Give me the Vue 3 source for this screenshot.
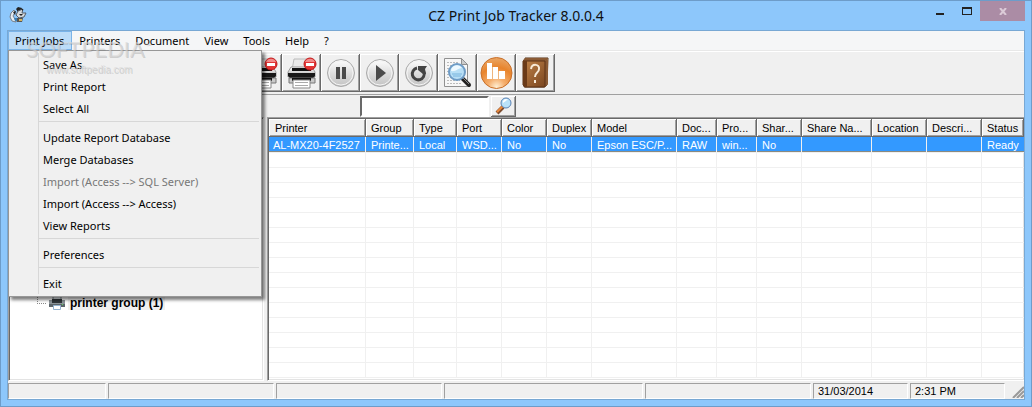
<template>
  <div class="window">
    <header class="title-bar">
      <svg class="app-icon" width="18" height="18" viewBox="0 0 18 18">
        <path d="M5 4 2 7 1 11 3 15 7 16 6 13 4 10 6 6z" fill="#e8eef2" stroke="#77808a" />
        <path d="M7 3 9 1 13 2 12 5 9 6z" fill="#222" />
        <path d="M9 5 14 3 13 7 17 7 15 11 10 12 7 9z" fill="#d5dade" stroke="#555d66" />
        <path d="M4 6 7 5 6 9z M10 8 14 8 12 10z M12 3h2v2z" fill="#222" />
        <path d="M6 12 14 12 13 16 8 16z" fill="#555" />
        <path d="M5 12h3v3H6z" fill="#3b7fb5" />
        <path d="M10 13h3v2h-3z" fill="#d7b35c" />
      </svg>
      <h1 class="title">CZ Print Job Tracker 8.0.0.4</h1>
      <div class="window-controls">
        <button class="control" aria-label="Minimize">
          <svg width="8" height="8" viewBox="0 0 8 8"><path d="M0 6h8v2H0z" fill="#222" /></svg>
        </button>
        <button class="control" aria-label="Maximize">
          <svg width="10" height="8" viewBox="0 0 10 8">
            <path d="M0 0h10v8H0z M1 2v5h8V2z" fill="#222" fill-rule="evenodd" />
          </svg>
        </button>
        <button class="control close" aria-label="Close">
          <svg width="8" height="7" viewBox="0 0 8 7">
            <path d="M1 0l6 7M7 0l-6 7" stroke="#dccbd8" stroke-width="2" />
          </svg>
        </button>
      </div>
    </header>

    <main class="client">
      <nav class="menu-bar">
        <button
          v-for="(item, i) in menuBar"
          :key="item"
          class="menu-bar-item"
          :class="{ open: i === 0 }"
        >
          {{ item }}
        </button>
      </nav>

      <div class="menu">
        <div v-for="(group, g) in menuGroups" :key="g" class="menu-group">
          <button
            v-for="item in group"
            :key="item.label"
            class="menu-item"
            :disabled="item.disabled"
          >
            {{ item.label }}
          </button>
        </div>
      </div>

      <div class="watermark">
        <span class="watermark-name">SOFTPEDIA<sup>™</sup></span>
        <span class="watermark-url">www.softpedia.com</span>
      </div>

      <div class="toolbar">
        <button v-for="tool in tools" :key="tool.label" class="tool" :aria-label="tool.label">
          <svg v-if="tool.icon === 'printer'" width="32" height="32" viewBox="0 0 32 32">
            <defs>
              <linearGradient id="body" x2="0" y2="1">
                <stop offset="0" stop-color="#fff" />
                <stop offset="1" stop-color="#a9a9a9" />
              </linearGradient>
            </defs>
            <path d="M8 2h13l2 11H6z" fill="#e9e9e9" stroke="#bbb" />
            <path d="M5 10h21l3 5v5H2v-5z" fill="url(#body)" stroke="#999" />
            <path d="M6 11h19v3H6z" fill="#111" />
            <path d="M2 16h27v3l-2 2H4l-2-2z" fill="#171717" />
            <path d="M3 21h26v5H3z" fill="#c9c9c9" stroke="#777" />
            <path d="M6 21h19v3H6z" fill="#111" />
            <path d="M7 23h17v8H7z" fill="#fff" stroke="#888" />
            <path d="M9 25.500h13M9 28.500h13" stroke="#aaa" />
            <path v-if="tool.page" d="M8 24h3v6H8z" fill="#3d7ec0" />
            <circle cx="24" cy="7" r="6" fill="#e23434" stroke="#c11b1b" />
            <path d="M19 5a5.500 5.500 0 0 1 10 0z" fill="#f28a8a" />
            <path d="M20 6h8v3h-8z" fill="#fff" />
          </svg>
          <svg v-else-if="tool.icon === 'report'" width="32" height="32" viewBox="0 0 32 32">
            <path d="M2.500 1.500h17l6 6v22h-23z" fill="#f7f7f7" stroke="#909090" />
            <path d="M19.500 1.500v6h6z" fill="#ccc" stroke="#909090" />
            <path
              d="M5 5.500h12M5 8.500h11M5 11.500h4M5 14.500h3M5 17.500h3M5 20.500h4M5 23.500h13M5 26.500h14"
              stroke="#bbb"
              stroke-dasharray="2 1"
            />
            <path d="M20 21l7 7" stroke="#222" stroke-width="4" stroke-linecap="round" />
            <path d="M21 21l6 6" stroke="#888" />
            <circle cx="15" cy="15" r="8" fill="#b8dff6" stroke="#6f9cc6" stroke-width="2" />
            <path d="M9 14a6 6 0 0 1 11-3c-4 0-6 4-11 3z" fill="#eef9ff" />
            <path d="M10 17h10M11 19h8" stroke="#79b4dd" />
          </svg>
          <svg v-else-if="tool.icon === 'chart'" width="34" height="34" viewBox="0 0 34 34">
            <defs>
              <radialGradient id="orange" cx=".5" cy=".95" r=".9">
                <stop offset="0" stop-color="#fff0d4" />
                <stop offset=".3" stop-color="#f5b070" />
                <stop offset=".7" stop-color="#e8842c" />
                <stop offset="1" stop-color="#e9a15d" />
              </radialGradient>
            </defs>
            <circle cx="16.500" cy="17" r="15.500" fill="url(#orange)" stroke="#c9702a" />
            <path d="M7 7h5v16H7z M13 11h5v12h-5z M19 15h6v8h-6z" fill="#fff" />
            <path d="M12.500 11v12M18.500 15v8" stroke="#eeb57e" />
          </svg>
          <svg v-else-if="tool.icon === 'help'" width="32" height="32" viewBox="0 0 32 32">
            <defs>
              <linearGradient id="cover" x2="1" y2="1">
                <stop offset="0" stop-color="#c08349" />
                <stop offset="1" stop-color="#7b461f" />
              </linearGradient>
            </defs>
            <path d="M5 1h23l-1 27-3 2H4z" fill="#e6d3ae" stroke="#563015" />
            <path d="M3 3l3-2h21l1 3v23l-3 3V4H3z" fill="#8a5a34" />
            <path d="M3 4h22v26H5l-2-2z" fill="url(#cover)" stroke="#5d3316" />
            <path d="M3 4h4v26H5l-2-2z" fill="#6a3a18" />
            <path
              d="M11 12c1-6 9-5 8 0 0 4-4 3-4 8M15 23v3"
              fill="none"
              stroke="#f7ead8"
              stroke-width="2"
            />
          </svg>
          <svg v-else width="32" height="32" viewBox="0 0 32 32">
            <defs>
              <linearGradient id="silver" x2="0" y2="1">
                <stop offset="0" stop-color="#fff" />
                <stop offset=".5" stop-color="#dedede" />
                <stop offset="1" stop-color="#c2c2c2" />
              </linearGradient>
            </defs>
            <circle cx="16" cy="16" r="13.500" fill="url(#silver)" stroke="#aaa" />
            <circle cx="16" cy="16" r="12" fill="none" stroke="#f4f4f4" />
            <path v-if="tool.icon === 'pause'" d="M11 10h4v12h-4z M17 10h4v12h-4z" fill="#4b4b4b" />
            <path v-if="tool.icon === 'play'" d="M12 8l10 8-10 8z" fill="#4b4b4b" />
            <g v-if="tool.icon === 'restart'">
              <path
                d="M14 11a6 6 0 1 0 7 4"
                fill="none"
                stroke="#444"
                stroke-width="3"
              />
              <path d="M15 9h9l-2 3 1 5h-3l-5-4z" fill="#444" />
            </g>
          </svg>
        </button>
      </div>

      <form class="search" @submit.prevent>
        <input v-model="query" class="search-input" type="text" aria-label="Search" />
        <button class="search-button" aria-label="Find">
          <svg width="18" height="18" viewBox="0 0 18 18">
            <path d="M2 16l6-6" stroke="#7c4a2c" stroke-width="4" />
            <path d="M2 15l6-6" stroke="#ea8a3e" stroke-width="2" />
            <circle cx="11" cy="6" r="5" fill="#b9e2fa" stroke="#5a82b4" />
            <path d="M8 6a3 3 0 0 1 5-3c-2 0-3 2-5 3z" fill="#fff" />
          </svg>
        </button>
      </form>

      <div class="panes">
        <div class="tree">
          <div class="tree-node">
            <svg width="16" height="16" viewBox="0 0 16 16">
              <path d="M4 0h8v6H4z" fill="#dfe5e8" stroke="#7b858a" />
              <path d="M0 5h3v2h10V5h3v6H0z" fill="#8b9499" />
              <path d="M3 4h10v4H3z" fill="#30363a" />
              <path d="M0 9h16v3H0z" fill="#5c656a" />
              <path d="M4.500 10.500h7v4h-7z" fill="#fff" stroke="#94b3d1" />
              <path d="M13 9h1v1h-1z" fill="#5bd45b" />
            </svg>
            <span class="tree-label">printer group (1)</span>
          </div>
        </div>

        <div class="list">
          <table>
            <colgroup>
              <col v-for="col in columns" :key="col.name" :style="{ width: col.width }" />
            </colgroup>
            <thead>
              <tr>
                <th v-for="col in columns" :key="col.name">{{ col.name }}</th>
              </tr>
            </thead>
            <tbody>
              <tr class="selected">
                <td v-for="col in columns" :key="col.name">{{ col.value }}</td>
              </tr>
              <tr v-for="n in 15" :key="n">
                <td v-for="col in columns" :key="col.name"></td>
              </tr>
            </tbody>
          </table>
        </div>
      </div>

      <footer class="status-bar">
        <div
          v-for="(panel, i) in statusPanels"
          :key="i"
          class="status-panel"
          :style="{ flexBasis: panel.width }"
        >
          {{ panel.text }}
        </div>
        <svg class="grip" width="12" height="12" viewBox="0 0 12 12">
          <path d="M1 12 12 1M5 12l7-7M9 12l3-3" stroke="#999" stroke-width="2" />
        </svg>
      </footer>
    </main>
  </div>
</template>

<script setup>
import { ref } from 'vue';

const query = ref('');

const menuBar = ['Print Jobs', 'Printers', 'Document', 'View', 'Tools', 'Help', '?'];

const menuGroups = [
  [{ label: 'Save As' }, { label: 'Print Report' }, { label: 'Select All' }],
  [
    { label: 'Update Report Database' },
    { label: 'Merge Databases' },
    { label: 'Import (Access --> SQL Server)', disabled: true },
    { label: 'Import (Access --> Access)' },
    { label: 'View Reports' },
  ],
  [{ label: 'Preferences' }],
  [{ label: 'Exit' }],
];

const tools = [
  { icon: 'printer', label: 'Cancel page', page: true },
  { icon: 'printer', label: 'Cancel printing' },
  { icon: 'pause', label: 'Pause' },
  { icon: 'play', label: 'Resume' },
  { icon: 'restart', label: 'Restart' },
  { icon: 'report', label: 'View report' },
  { icon: 'chart', label: 'Chart' },
  { icon: 'help', label: 'Help' },
];

const columns = [
  { name: 'Printer', width: '97px', value: 'AL-MX20-4F2527' },
  { name: 'Group', width: '48px', value: 'Printe...' },
  { name: 'Type', width: '43px', value: 'Local' },
  { name: 'Port', width: '45px', value: 'WSD...' },
  { name: 'Color', width: '45px', value: 'No' },
  { name: 'Duplex', width: '45px', value: 'No' },
  { name: 'Model', width: '85px', value: 'Epson ESC/P...' },
  { name: 'Doc...', width: '40px', value: 'RAW' },
  { name: 'Pro...', width: '40px', value: 'win...' },
  { name: 'Shar...', width: '45px', value: 'No' },
  { name: 'Share Na...', width: '70px', value: '' },
  { name: 'Location', width: '55px', value: '' },
  { name: 'Descri...', width: '55px', value: '' },
  { name: 'Status', width: 'auto', value: 'Ready' },
];

const statusPanels = [
  { width: '98px', text: '' },
  { width: '166px', text: '' },
  { width: '166px', text: '' },
  { width: '199px', text: '' },
  { width: '166px', text: '' },
  { width: '95px', text: '31/03/2014' },
  { width: '95px', text: '2:31 PM' },
];
</script>

<style>
body {
  margin: 0;
}
</style>

<style scoped>
* {
  box-sizing: border-box;
}

button {
  display: flex;
  align-items: center;
  justify-content: center;
  flex-shrink: 0;
  padding: 0;
  border: none;
  background: none;
  color: #000;
  font: inherit;
}

svg {
  display: block;
  flex-shrink: 0;
}

.window {
  display: flex;
  flex-direction: column;
  min-height: 100vh;
  padding: 0 6px 6px;
  border: 1px solid #6d9cc9;
  background: #8dc7fb;
  font-family: 'Noto Sans', sans-serif;
  font-size: 11px;
}

.title-bar {
  display: grid;
  grid-template-columns: 1fr auto 1fr;
  height: 29px;
}

.app-icon {
  margin: 5px 2px;
}

.title {
  margin: 0;
  font-size: 14px;
  font-weight: 400;
  line-height: 29px;
  color: #111;
}

.window-controls {
  display: flex;
  justify-content: flex-end;
}

.control {
  width: 27px;
  height: 20px;
}

.control.close {
  width: 45px;
  background: #ab8ca5;
}

.client {
  position: relative;
  display: flex;
  flex: 1;
  flex-direction: column;
  border: 1px solid #78a8d4;
  background: #f0f0f0;
}

.menu-bar {
  display: flex;
  height: 20px;
  background: #f5f6f7;
  border-bottom: 1px solid #e8e8e8;
}

.menu-bar-item {
  height: 19px;
  padding: 0 8px 0 7px;
}

.menu-bar-item.open {
  background: #bcdcf8;
  box-shadow: inset 0 0 0 1px #79b3e8;
}

.menu {
  position: absolute;
  z-index: 2;
  top: 19px;
  left: 0;
  width: 254px;
  padding: 2px;
  border: 1px solid #979797;
  background: #f0f0f0;
  box-shadow: 3px 3px 3px rgba(0, 0, 0, 0.5);
}

.menu-group {
  margin-left: 27px;
  border-left: 1px solid #d7d7d7;
}

.menu-group + .menu-group {
  padding-top: 7px;
  background: linear-gradient(#d7d7d7, #d7d7d7) 0 2px / 100% 1px no-repeat;
}

.menu-item {
  width: 100%;
  height: 22px;
  padding-left: 4px;
  justify-content: flex-start;
}

.menu-item:disabled {
  color: #777;
}

.watermark {
  position: absolute;
  z-index: 3;
  top: 3px;
  left: 18px;
  display: flex;
  flex-direction: column;
  gap: 2px;
  color: rgba(215, 215, 215, 0.6);
  text-shadow: 1px 1px rgba(120, 120, 120, 0.3);
  pointer-events: none;
}

.watermark-name {
  font-family: Lato, sans-serif;
  font-size: 22px;
  line-height: 24px;
}

.watermark-name sup {
  font-size: 8px;
}

.watermark-url {
  padding-left: 20px;
  font-family: 'Liberation Sans', sans-serif;
  font-size: 10px;
  line-height: 14px;
}

.toolbar {
  display: flex;
  height: 44px;
  padding: 2px 0 3px 235px;
  border-top: 1px solid #fff;
  border-bottom: 1px solid #a0a0a0;
}

.tool {
  width: 39px;
  height: 38px;
}

.tool,
.search-button {
  box-shadow: inset -1px -1px #696969, inset 1px 1px #fff, inset -2px -2px #a0a0a0;
}

.search {
  display: flex;
  align-items: center;
  height: 22px;
  padding-left: 352px;
  gap: 2px;
}

.search-input {
  width: 129px;
  height: 21px;
  padding: 0 4px;
  border: 2px solid;
  border-color: #696969 #fff #fff #696969;
  border-radius: 0;
  background: #fff;
  font: inherit;
}

.search-button {
  width: 25px;
  height: 21px;
}

.panes {
  display: flex;
  flex: 1;
  gap: 3px;
}

.tree,
.list {
  border: 1px solid;
  border-color: #a0a0a0 #fff #fff #a0a0a0;
  background: #fff;
  box-shadow: inset 1px 1px #696969, inset -1px -1px #e3e3e3;
}

.tree {
  width: 256px;
  padding: 177px 0 0 28px;
  font-family: 'Liberation Sans', sans-serif;
}

.tree-node {
  display: flex;
  align-items: center;
  gap: 3px;
  height: 16px;
}

.tree-node::before {
  content: '';
  width: 8px;
  height: 8px;
  margin-bottom: 8px;
  border: dotted #888;
  border-width: 0 0 1px 1px;
}

.tree-label {
  padding: 0 2px;
  background: #f0f0f0;
  font-size: 12px;
  font-weight: 700;
  line-height: 14px;
}

.list {
  flex: 1;
  padding: 1px 0 1px 1px;
  border-right: none;
}

table {
  width: 100%;
  table-layout: fixed;
  border-collapse: separate;
  border-spacing: 0;
  font-family: 'Liberation Sans', sans-serif;
  font-size: 11px;
}

th,
td {
  padding: 0 0 0 5px;
  overflow: hidden;
  font-weight: 400;
  text-align: left;
  white-space: nowrap;
}

th {
  height: 18px;
  background: #f0f0f0;
  box-shadow: inset -1px -1px #696969, inset 1px 1px #fff, inset -2px -2px #a0a0a0;
  line-height: 18px;
}

th:first-child {
  padding-left: 6px;
}

td {
  height: 15px;
  border-top: 1px solid #f0f0f0;
  border-right: 1px solid #f0f0f0;
  line-height: 14px;
}

td:first-child {
  padding-left: 4px;
}

td:last-child {
  border-right: none;
}

tr:last-child td {
  height: 16px;
  border-bottom: 1px solid #f0f0f0;
}

.selected td {
  border-top: none;
  background: #39f;
  color: #fff;
  box-shadow: inset 0 -1px #8a8a80;
}

.status-bar {
  display: flex;
  height: 18px;
  padding-top: 2px;
  gap: 2px;
}

.status-panel {
  flex: 0 1 auto;
  height: 16px;
  padding-left: 4px;
  border: 1px solid;
  border-color: #a0a0a0 #fff #fff #a0a0a0;
  font-family: 'Liberation Sans', sans-serif;
  font-size: 11px;
  line-height: 14px;
}

.grip {
  margin: 3px 0 0 auto;
}
</style>
